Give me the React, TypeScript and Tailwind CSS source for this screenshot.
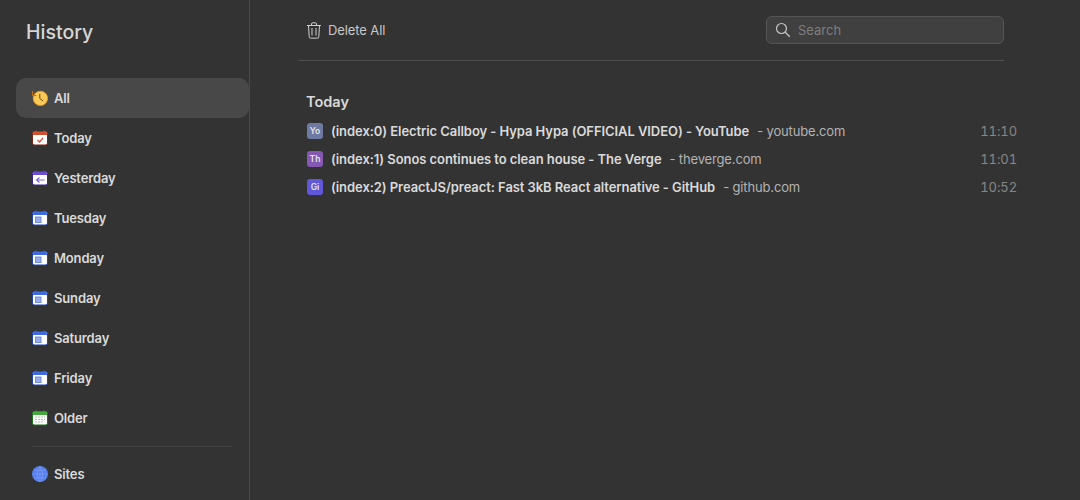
type CalKind = "today" | "yesterday" | "week" | "older";

const calColors: Record<CalKind, { head: string; edge: string; mark: string }> = {
  today: { head: "#d2502e", edge: "#7a2412", mark: "#d9503a" },
  yesterday: { head: "#6a4fd0", edge: "#3a2590", mark: "#7a62d8" },
  week: { head: "#3f6be0", edge: "#1f3fa8", mark: "#6f8de0" },
  older: { head: "#43ab3c", edge: "#1f6e1c", mark: "#b5bdb3" },
};

function CalendarIcon({ kind }: { kind: CalKind }) {
  const c = calColors[kind];
  return (
    <svg width="16" height="16" viewBox="0 0 16 16" className="shrink-0">
      <rect x="0.5" y="1.5" width="15" height="13.500" rx="2" fill="#fff" stroke={c.edge} />
      <path d="M1 3.500a2 2 0 0 1 2-2h10a2 2 0 0 1 2 2V5H1z" fill={c.head} />
      <path d="M4 0.500v2M12 0.500v2" stroke={c.head} strokeWidth="1" />
      {kind === "today" && <path d="M5.500 10l2 2 3.500-4" fill="none" stroke={c.mark} strokeWidth="1.200" />}
      {kind === "yesterday" && (
        <path d="M12.500 10H4.500M7.500 7.500 4.500 10l3 2.500" fill="none" stroke={c.mark} strokeWidth="1.100" />
      )}
      {kind === "week" && <rect x="3.500" y="7" width="5.500" height="5.500" fill="#98abe8" stroke={c.mark} />}
      {kind === "older" && (
        <path
          d="M3 7h2M6 7h2M9 7h2M12 7h1M3 9.500h2M6 9.500h2M9 9.500h2M12 9.500h1M3 12h2M6 12h2M9 12h2"
          stroke={c.mark}
          strokeWidth="1"
        />
      )}
    </svg>
  );
}

function ClockIcon() {
  return (
    <svg width="16" height="16" viewBox="0 0 16 16" className="shrink-0">
      <circle cx="8.400" cy="8.400" r="7.200" fill="#fbc957" stroke="#dd982c" strokeWidth="0.900" />
      <path d="M7.800 3.800V8.500l3.200 2.400" fill="none" stroke="#6b4a12" strokeWidth="1" />
      <path d="M0.500 1v4.500H4.500" fill="none" stroke="#c9701d" strokeWidth="1" />
    </svg>
  );
}

function GlobeIcon() {
  return (
    <svg width="16" height="16" viewBox="0 0 16 16" className="shrink-0">
      <circle cx="8" cy="8" r="8" fill="#5680ee" />
      <path
        d="M8 0v16M0.500 8h15M2 3.500c3.500 1.500 8.500 1.500 12 0M2 12.500c3.500-1.500 8.500-1.500 12 0M8 0C4.500 3 4.500 13 8 16M8 0c3.500 3 3.500 13 0 16"
        fill="none"
        stroke="#7d9cf2"
        strokeWidth="0.700"
      />
    </svg>
  );
}

function TrashIcon() {
  return (
    <svg width="14" height="17" viewBox="0 0 14 17" fill="none" stroke="#d0d0d0" strokeWidth="1" className="shrink-0">
      <path d="M0 3.500h14M4.500 3.500V2a1.200 1.200 0 0 1 1.200-1.200h2.600A1.200 1.200 0 0 1 9.500 2v1.500" />
      <path d="M1.500 3.500l.7 11.200a1.500 1.500 0 0 0 1.500 1.500h6.600a1.500 1.500 0 0 0 1.500-1.500l.7-11.200" />
      <path d="M5 6v7.500M9 6v7.500" />
    </svg>
  );
}

function SearchIcon() {
  return (
    <svg width="16" height="16" viewBox="0 0 16 16" fill="none" stroke="#c4c4c4" className="shrink-0">
      <circle cx="6.500" cy="6.500" r="5" strokeWidth="1.200" />
      <path d="M10.200 10.200l4.600 4.600" strokeWidth="1.300" />
    </svg>
  );
}

const weekdays = ["Tuesday", "Monday", "Sunday", "Saturday", "Friday"];

const visits = [
  { badge: "Yo", color: "bg-[#6f7aa3]", title: "(index:0) Electric Callboy - Hypa Hypa (OFFICIAL VIDEO) - YouTube", site: "youtube.com", time: "11:10" },
  { badge: "Th", color: "bg-[#8458b3]", title: "(index:1) Sonos continues to clean house - The Verge", site: "theverge.com", time: "11:01" },
  { badge: "Gi", color: "bg-[#5f58d8]", title: "(index:2) PreactJS/preact: Fast 3kB React alternative - GitHub", site: "github.com", time: "10:52" },
];

function NavItem({ label, icon, active }: { label: string; icon: React.ReactNode; active?: boolean }) {
  return (
    <div className={`flex h-10 items-center gap-1.5 rounded-[10px] pl-4 ${active ? "bg-[#484848]" : ""}`}>
      {icon}
      <span className="pt-[2px] text-[13px] font-semibold tracking-[-0.15px] text-[#dadada]">{label}</span>
    </div>
  );
}

export default function App() {
  return (
    <div className="flex h-[500px] w-[1080px] overflow-hidden bg-[#333333] font-['Inter',sans-serif]">
      <aside className="w-[250px] shrink-0 border-r border-[#4a4a4a] pl-4">
        <h1 className="pl-2.5 pt-[18px] text-[19.5px] leading-7 font-medium text-[#d6d6d6]">History</h1>
        <nav className="mt-8">
          <NavItem label="All" icon={<ClockIcon />} active />
          <NavItem label="Today" icon={<CalendarIcon kind="today" />} />
          <NavItem label="Yesterday" icon={<CalendarIcon kind="yesterday" />} />
          {weekdays.map((day) => (
            <NavItem key={day} label={day} icon={<CalendarIcon kind="week" />} />
          ))}
          <NavItem label="Older" icon={<CalendarIcon kind="older" />} />
        </nav>
        <div className="mx-4 mt-2 w-[200px] border-t border-[#444444]" />
        <div className="mt-[7px]">
          <NavItem label="Sites" icon={<GlobeIcon />} />
        </div>
      </aside>

      <main className="flex-1 pl-12">
        <div className="flex h-[61px] w-[706px] items-start justify-between border-b border-[#4f4f4f] pt-4">
          <button className="ml-[9px] flex h-7 items-center gap-[7px] text-[13px] tracking-[-0.1px] text-[#c8c8c8]">
            <TrashIcon />
            <span className="pt-[2px]">Delete All</span>
          </button>
          <div className="flex h-7 w-[238px] items-center gap-[7px] rounded-md border border-[#555555] bg-[#404040] pl-2">
            <SearchIcon />
            <span className="pt-[2px] text-[13px] text-[#7e7e7e]">Search</span>
          </div>
        </div>

        <section className="w-[719px] pl-2 pt-[31px]">
          <h2 className="h-5 text-[14.5px] leading-5 font-semibold text-[#dadada]">Today</h2>
          <ul className="mt-[5px]">
            {visits.map((v) => (
              <li key={v.badge} className="flex h-7 items-center pl-px">
                <span className={`flex h-4 w-4 shrink-0 items-center justify-center rounded-[3px] text-[8.5px] font-semibold text-[#e4e4e4] ${v.color}`}>
                  {v.badge}
                </span>
                <span className="ml-2 pt-[2px] text-[13px] font-semibold tracking-[-0.07px] text-[#dadada]">{v.title}</span>
                <span className="ml-2 pt-[2px] text-[13px] tracking-[-0.15px] text-[#b4b4b4]">- {v.site}</span>
                <span className="ml-auto pt-[2px] text-[13px] tabular-nums tracking-[-0.1px] text-[#868686]">{v.time}</span>
              </li>
            ))}
          </ul>
        </section>
      </main>
    </div>
  );
}
